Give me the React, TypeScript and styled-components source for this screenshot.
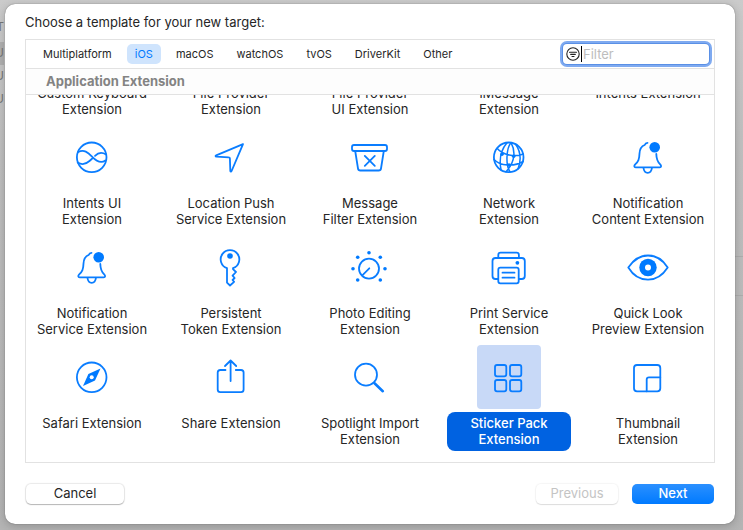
import React, { useState } from "react";
import styled, { createGlobalStyle } from "styled-components";

const GlobalStyle = createGlobalStyle`
  * { box-sizing: border-box; }
  body {
    margin: 0;
    background: #c2c2c2;
    color: #262626;
    font-family: Inter, "Liberation Sans", sans-serif;
    font-size: 13px;
  }
  button, input { font: inherit; color: inherit; }
`;

const Desktop = styled.div`
  position: relative;
  display: flex;
  height: 100vh;
  min-height: 400px;
  padding: 4px 8px 6px 5px;
  overflow: hidden;
  background: linear-gradient(#cbcbcb, #bfbfbf 30%, #b4b4b4);
`;

const Navigator = styled.div`
  position: absolute;
  inset: 0 auto 0 0;
  width: 4px;
  padding-top: 16px;
  overflow: hidden;
  color: #777;
`;

const NavigatorRow = styled.div<{ $active?: boolean; $spaced?: boolean }>`
  display: flex;
  justify-content: flex-end;
  height: 23px;
  margin-bottom: ${(p) => (p.$spaced ? 3 : 0)}px;
  font-size: 12px;
  line-height: 22px;
  background: ${(p) => (p.$active ? "#b0b0b0" : "transparent")};
`;

const Inspector = styled.div`
  position: absolute;
  top: 256px;
  right: 0;
  width: 8px;
  height: 40px;
  border: solid #adadad;
  border-width: 1px 0;
`;

const Sheet = styled.main`
  position: relative;
  display: flex;
  flex: 1;
  flex-direction: column;
  min-width: 0;
  padding: 0 20px 20px;
  border-radius: 10px;
  background: #fff;
  box-shadow: 0 0 1px rgba(0, 0, 0, 0.6), 0 2px 10px rgba(0, 0, 0, 0.2);
`;

const Title = styled.h1`
  margin: 0;
  padding-top: 2px;
  font-size: 13px;
  font-weight: 400;
  line-height: 33px;
`;

const Panel = styled.section`
  display: flex;
  flex: 1;
  flex-direction: column;
  min-height: 0;
  border: 1px solid #e2e2e2;
`;

const TabBar = styled.div`
  display: flex;
  flex: none;
  align-items: center;
  justify-content: space-between;
  height: 29px;
  padding: 0 5px 0 9px;
  border-bottom: 1px solid #e2e2e2;
`;

const Tabs = styled.nav`
  display: flex;
  gap: 7px;
`;

const Tab = styled.button<{ $active: boolean }>`
  height: 20px;
  padding: 0 8px;
  border: 0;
  border-radius: 5px;
  background: ${(p) => (p.$active ? "#cfe4fd" : "transparent")};
  color: ${(p) => (p.$active ? "#007aff" : "#262626")};
  font-size: 11px;
  line-height: 18px;
`;

const FilterField = styled.label`
  display: flex;
  align-items: center;
  width: 146px;
  height: 20px;
  padding-left: 3px;
  border-radius: 4px;
  background: #fff;
  box-shadow: 0 0 0 1px #5a90e6, 0 0 0 3px #7faaf0;
`;

const Caret = styled.span`
  width: 1px;
  height: 16px;
  margin-left: 1px;
  background: #000;
`;

const FilterInput = styled.input`
  flex: 1;
  min-width: 0;
  height: 18px;
  padding: 0 0 0 1px;
  border: 0;
  outline: 0;
  background: transparent;
  &::placeholder { color: #bdbdbd; opacity: 1; }
`;

const SectionTitle = styled.h2`
  flex: none;
  height: 26px;
  margin: 0;
  padding-left: 20px;
  border-bottom: 1px solid #e2e2e2;
  background: #fdfdfd;
  color: #838383;
  font-size: 13px;
  font-weight: 700;
  line-height: 25px;
`;

const Viewport = styled.div`
  display: flex;
  flex: 1;
  flex-direction: column;
  justify-content: flex-end;
  min-height: 0;
  padding: 0 4px 11px;
  overflow: hidden;
`;

const Grid = styled.div`
  display: grid;
  flex: none;
  grid-template-columns: repeat(5, minmax(0, 1fr));
  gap: 4px 15px;
`;

const Template = styled.button`
  display: flex;
  flex-direction: column;
  align-items: center;
  gap: 3px;
  min-height: 106px;
  padding: 0;
  border: 0;
  background: transparent;
`;

const IconBox = styled.span<{ $selected: boolean }>`
  width: 64px;
  height: 64px;
  border-radius: 4px;
  background: ${(p) => (p.$selected ? "#c8d9f7" : "transparent")};
`;

const TemplateName = styled.span<{ $selected: boolean }>`
  width: 100%;
  padding: 3px 0 4px;
  border-radius: 8px;
  background: ${(p) => (p.$selected ? "#0062e1" : "transparent")};
  color: ${(p) => (p.$selected ? "#fff" : "#262626")};
  font-weight: ${(p) => (p.$selected ? 500 : 400)};
  line-height: 16px;
  white-space: pre-line;
`;

const Footer = styled.footer`
  display: flex;
  align-items: center;
  margin-top: 21px;
  padding: 0 1px;
`;

const Button = styled.button<{ $primary?: boolean; $wide?: boolean }>`
  width: ${(p) => (p.$wide ? 98 : 82)}px;
  height: 20px;
  padding: 0 0 2px;
  border: 0;
  border-radius: 5px;
  background: ${(p) => (p.$primary ? "linear-gradient(#2b90ff, #007aff)" : "#fff")};
  color: ${(p) => (p.$primary ? "#fff" : "#262626")};
  font-weight: ${(p) => (p.$primary ? 500 : 400)};
  line-height: 18px;
  box-shadow: ${(p) =>
    p.$primary ? "none" : "0 0 1px 1px rgba(0, 0, 0, 0.09), 0 1px 1px rgba(0, 0, 0, 0.22)"};

  &:disabled {
    color: #c4c4c4;
    box-shadow: 0 0 1px 1px rgba(0, 0, 0, 0.04), 0 1px 1px rgba(0, 0, 0, 0.1);
  }
`;

const NavButtons = styled.div`
  display: flex;
  gap: 14px;
  margin-left: auto;
`;

const Glyph = styled.svg`
  display: block;
  fill: none;
  stroke: #0a7dff;
  stroke-width: 1.8;
  stroke-linecap: round;
  stroke-linejoin: round;

  .solid { fill: #007aff; stroke: none; }
  .hole { fill: #fff; stroke: none; }
`;

const Bell = (
  <>
    <path d="M31.5 17.800c-1.700 0-2.300.7-2.800 2.200-3.400 1.300-5 4.200-5.200 8.500-.2 6-1.200 8-4.300 10.900-1.300 1.300-1.200 2.900.5 2.900h24c1.700 0 1.800-1.600.5-2.900-2.700-2.600-3.800-4.600-3.900-10.400" />
    <path d="M27.500 43c.4 3.300 2 4.900 4.200 4.900s3.800-1.600 4.200-4.900" />
    <circle className="solid" cx="38.700" cy="22.300" r="5.300" />
  </>
);

const glyphs: Record<string, React.ReactNode> = {
  intents: (
    <>
      <circle cx="31.700" cy="32.300" r="14.800" />
      <path d="M18.300 27c5.700-2.800 9.700.4 13.700 4.600s8.500 7.400 13.300 3.900M17.700 37.500c4.300 2.800 8.300 1.600 11.800-1.500l2.500-2.200M35 30.800c3-3 7-3.800 11-1.300" />
    </>
  ),
  location: <path d="M44 19.200 17.200 30.300c-1 .4-.8 1.300.2 1.400l12.300.7c.9 0 1.200.4 1.200 1.200l.4 12.200c0 1 .9 1.200 1.300.2Z" />,
  message: (
    <>
      <rect x="14" y="20" width="35" height="6" rx="2" />
      <path d="m17.200 26 2.800 17.500c.2 1.400 1 2 2.300 2h18.400c1.300 0 2.100-.6 2.300-2L45.800 26M26.800 30.900l10 10M36.800 30.900l-10 10" />
    </>
  ),
  network: (
    <>
      <circle cx="31.700" cy="32.300" r="14.800" />
      <g strokeWidth="1.500">
        <path d="M30 17.700c-5.500 6.500-8.500 14-6 26.800M34 17.700c-4.500 5-5.800 22-1 29.200M34 17.700c4.500 8 4.500 19-5 29M38.500 19c5.500 8 6 16 2.500 25M20 23.300c6 7 18 9 26.300 5.700M17 34.500c6 6.500 20 7.500 29.200 2" />
      </g>
      <circle className="solid" cx="25" cy="29.300" r="1.800" />
      <circle className="solid" cx="36.700" cy="31.200" r="1.800" />
      <circle className="solid" cx="32" cy="40" r="1.800" />
    </>
  ),
  bell: Bell,
  key: (
    <>
      <path d="M28 33.200a9.300 9.300 0 1 1 6 0v1l3 2.800-3.400 3.700 2 2.300-2 2 1.500 1.800L31 50.500l-3-2.800Z" />
      <circle className="solid" cx="31" cy="21" r="2.800" />
    </>
  ),
  dial: (
    <>
      <circle cx="31" cy="33.600" r="10" />
      <path d="m31.300 33.300-7 7" />
      {[[31, 17.7], [19.7, 22.3], [42.3, 22.3], [15, 33.7], [47, 33.7], [19.7, 45], [42.3, 45]].map(([x, y]) => (
        <circle key={`${x}-${y}`} className="solid" cx={x} cy={y} r="1.800" />
      ))}
    </>
  ),
  printer: (
    <>
      <path d="M20.700 44H18.500c-1.800 0-3-1.200-3-3V26c0-1.800 1.200-3 3-3h26.300c1.800 0 3 1.200 3 3v15c0 1.800-1.200 3-3 3h-2.800" />
      <path d="M21.300 23v-3c0-1.500.8-2.300 2.300-2.300h16c1.500 0 2.300.8 2.300 2.300v3" />
      <rect x="21.300" y="32.700" width="20.400" height="15.600" rx="2" />
      <path d="M25.500 37.700h12M25.500 42.700h12" />
      <circle className="solid" cx="40.400" cy="27.800" r="1.900" />
    </>
  ),
  eye: (
    <>
      <path d="M12.300 32.500c5-7.500 11.500-12 19.700-12s15 4.500 19.700 12c-5 7.700-11.500 12.200-19.700 12.200s-15-4.500-19.700-12.200Z" />
      <circle className="solid" cx="32" cy="32.500" r="8.700" />
      <circle className="hole" cx="32" cy="32.500" r="3" />
    </>
  ),
  compass: (
    <>
      <circle cx="31.700" cy="32.300" r="14.800" />
      <path className="solid" d="M40.500 23.500 35 35.600 23 41.100 28.400 29Z" />
      <circle className="hole" cx="31.700" cy="32.300" r="2" />
    </>
  ),
  share: (
    <path d="M26.500 25H21.300c-1.700 0-2.600.9-2.600 2.600v17c0 1.700.9 2.600 2.600 2.600H42c1.700 0 2.600-.9 2.600-2.600v-17c0-1.700-.9-2.600-2.600-2.600h-5.200M31.600 36V15.500M26 21l5.600-5.500L37.200 21" />
  ),
  search: (
    <>
      <circle cx="28" cy="29.700" r="11" />
      <g strokeWidth="2.600">
        <path d="m36.500 38.200 8.300 8" />
      </g>
    </>
  ),
  grid: (
    <>
      <rect x="18" y="20" width="11.300" height="11.300" rx="2" />
      <rect x="33" y="20" width="11.300" height="11.300" rx="2" />
      <rect x="18" y="35" width="11.300" height="11.300" rx="2" />
      <rect x="33" y="35" width="11.300" height="11.300" rx="2" />
    </>
  ),
  thumbnail: (
    <>
      <rect x="18" y="20" width="26.300" height="26.300" rx="3" />
      <path d="M44.300 32.300H33c-1.600 0-2.300.8-2.300 2.300v11.700" />
    </>
  ),
};

type Item = { name: string; glyph?: string };

const templates: Item[] = [
  { name: "Custom Keyboard\nExtension" },
  { name: "File Provider\nExtension" },
  { name: "File Provider\nUI Extension" },
  { name: "iMessage\nExtension" },
  { name: "Intents Extension" },
  { name: "Intents UI\nExtension", glyph: "intents" },
  { name: "Location Push\nService Extension", glyph: "location" },
  { name: "Message\nFilter Extension", glyph: "message" },
  { name: "Network\nExtension", glyph: "network" },
  { name: "Notification\nContent Extension", glyph: "bell" },
  { name: "Notification\nService Extension", glyph: "bell" },
  { name: "Persistent\nToken Extension", glyph: "key" },
  { name: "Photo Editing\nExtension", glyph: "dial" },
  { name: "Print Service\nExtension", glyph: "printer" },
  { name: "Quick Look\nPreview Extension", glyph: "eye" },
  { name: "Safari Extension", glyph: "compass" },
  { name: "Share Extension", glyph: "share" },
  { name: "Spotlight Import\nExtension", glyph: "search" },
  { name: "Sticker Pack\nExtension", glyph: "grid" },
  { name: "Thumbnail\nExtension", glyph: "thumbnail" },
];

const platforms = ["Multiplatform", "iOS", "macOS", "watchOS", "tvOS", "DriverKit", "Other"];

export default function App() {
  const [platform, setPlatform] = useState("iOS");
  const [selected, setSelected] = useState("Sticker Pack\nExtension");

  return (
    <Desktop>
      <GlobalStyle />
      <Navigator aria-hidden="true">
        <NavigatorRow $spaced>T</NavigatorRow>
        <NavigatorRow $active>U</NavigatorRow>
        <NavigatorRow>U</NavigatorRow>
        <NavigatorRow>U</NavigatorRow>
      </Navigator>
      <Inspector />
      <Sheet>
        <Title>Choose a template for your new target:</Title>
        <Panel>
          <TabBar>
            <Tabs>
              {platforms.map((p) => (
                <Tab key={p} $active={p === platform} aria-pressed={p === platform} onClick={() => setPlatform(p)}>
                  {p}
                </Tab>
              ))}
            </Tabs>
            <FilterField>
              <svg width="14" height="14" viewBox="0 0 14 14" fill="none" stroke="#222" strokeWidth="1.100" strokeLinecap="round" aria-hidden="true">
                <circle cx="7" cy="7" r="6.200" />
                <path d="M3.500 5.200h7M4.700 7.400h4.600M6 9.500h2" />
              </svg>
              <Caret />
              <FilterInput type="text" aria-label="Filter" placeholder="Filter" />
            </FilterField>
          </TabBar>
          <SectionTitle>Application Extension</SectionTitle>
          <Viewport>
            <Grid>
              {templates.map(({ name, glyph }) => (
                <Template key={name} aria-pressed={name === selected} onClick={() => setSelected(name)}>
                  <IconBox $selected={name === selected}>
                    {glyph && (
                      <Glyph width="64" height="64" viewBox="0 0 64 64" aria-hidden="true">
                        {glyphs[glyph]}
                      </Glyph>
                    )}
                  </IconBox>
                  <TemplateName $selected={name === selected}>{name}</TemplateName>
                </Template>
              ))}
            </Grid>
          </Viewport>
        </Panel>
        <Footer>
          <Button $wide>Cancel</Button>
          <NavButtons>
            <Button disabled>Previous</Button>
            <Button $primary>Next</Button>
          </NavButtons>
        </Footer>
      </Sheet>
    </Desktop>
  );
}
